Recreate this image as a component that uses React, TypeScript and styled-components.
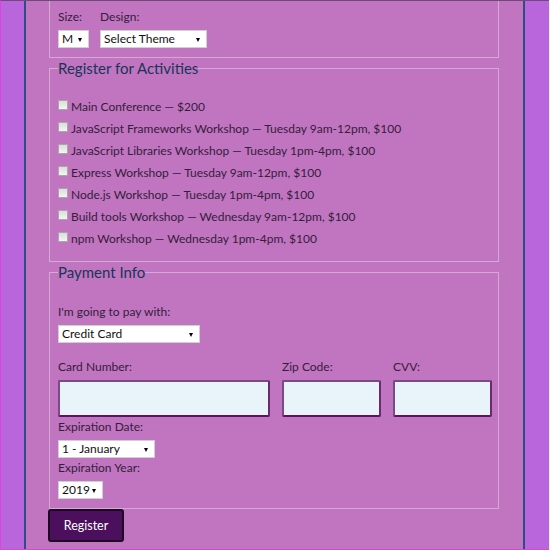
import React from "react";
import styled, { createGlobalStyle } from "styled-components";

const Global = createGlobalStyle`
  html, body { margin: 0; padding: 0; background: #f4eef6; }
  * { box-sizing: border-box; }
  body { font-family: Lato, "Open Sans", sans-serif; }
`;

const Page = styled.div`
  width: 549px;
  height: 550px;
  overflow: hidden;
  background: #b966dc;
  border-left: 1px solid #e040e0;
  border-top: 1px solid #6d4a77;
  border-bottom: 1px solid #e040e0;
`;

const Container = styled.div`
  margin-left: 23px;
  width: 501px;
  height: 100%;
  background: #c175c1;
  border-left: 2px solid #2b4f82;
  border-right: 2px solid #2b4f82;
  padding: 0 24px 0 23px;
`;

const Fieldset = styled.fieldset<{ $open?: boolean; $pb?: number }>`
  margin: 0;
  padding: ${(p) => (p.$open ? "8px" : "0")} 8px ${(p) => p.$pb ?? 9}px;
  border: 1px solid #d4a9d4;
  ${(p) => (p.$open ? "border-top: none;" : "")}
  min-width: 0;
`;

const Legend = styled.legend`
  font-size: 15px;
  line-height: 20px;
  color: #163656;
  padding: 0;
  margin-left: 0;
`;

const Label = styled.label`
  display: block;
  font-size: 12px;
  line-height: 16px;
  color: #33203a;
`;

const Row = styled.div`
  display: flex;
  gap: 11px;
`;

const Field = styled.div<{ $mt?: number }>`
  display: flex;
  flex-direction: column;
  gap: 5px;
  margin-top: ${(p) => p.$mt ?? 0}px;
`;

const SelectBox = styled.div<{ $w: number }>`
  position: relative;
  width: ${(p) => p.$w}px;
  height: 18px;
  background: #fff;
  border: 1px solid #d0d0d0;
  font-size: 12px;
  line-height: 16px;
  color: #111;
  padding-left: 3px;
  &::after {
    content: "";
    position: absolute;
    right: 6px;
    top: 7px;
    border-left: 2.5px solid transparent;
    border-right: 2.5px solid transparent;
    border-top: 4px solid #000;
  }
`;

const Activities = styled.div`
  display: flex;
  flex-direction: column;
  margin-top: 17px;
`;

const Activity = styled.label`
  display: flex;
  align-items: center;
  height: 22px;
  font-size: 12px;
  color: #33203a;
`;

const Check = styled.span`
  display: inline-block;
  width: 10px;
  height: 10px;
  margin-right: 3px;
  margin-top: -3px;
  border: 1px solid #a8a8a8;
  background: linear-gradient(#dcdcdc, #f4f4f4);
`;

const CardGrid = styled.div`
  display: grid;
  grid-template-columns: 212px 99px 99px;
  column-gap: 12px;
  margin-top: 16px;
`;

const Input = styled.div`
  height: 37px;
  background: #e8f4fa;
  border: 2px solid #7a4a88;
  border-bottom-color: #5a1560;
  border-right-color: #6a2a70;
  border-radius: 2px;
`;

const Button = styled.button`
  display: block;
  margin-left: -1px;
  width: 76px;
  height: 33px;
  background: #4b0f5e;
  border: 2px solid #1d0a22;
  border-radius: 3px;
  color: #fff;
  font-family: Lato, "Open Sans", sans-serif;
  font-size: 12.5px;
`;

const activities = [
  "Main Conference — $200",
  "JavaScript Frameworks Workshop — Tuesday 9am-12pm, $100",
  "JavaScript Libraries Workshop — Tuesday 1pm-4pm, $100",
  "Express Workshop — Tuesday 9am-12pm, $100",
  "Node.js Workshop — Tuesday 1pm-4pm, $100",
  "Build tools Workshop — Wednesday 9am-12pm, $100",
  "npm Workshop — Wednesday 1pm-4pm, $100",
];

export default function App() {
  return (
    <>
      <Global />
      <Page>
        <Container>
          <Fieldset $open>
            <Row>
              <Field>
                <Label>Size:</Label>
                <SelectBox $w={31}>M</SelectBox>
              </Field>
              <Field>
                <Label>Design:</Label>
                <SelectBox $w={107}>Select Theme</SelectBox>
              </Field>
            </Row>
          </Fieldset>
          <Fieldset $pb={12}>
            <Legend>Register for Activities</Legend>
            <Activities>
              {activities.map((a) => (
                <Activity key={a}>
                  <Check />
                  {a}
                </Activity>
              ))}
            </Activities>
          </Fieldset>
          <Fieldset $pb={9}>
            <Legend>Payment Info</Legend>
            <Field $mt={22}>
              <Label>I'm going to pay with:</Label>
              <SelectBox $w={142}>Credit Card</SelectBox>
            </Field>
            <CardGrid>
              <Field>
                <Label>Card Number:</Label>
                <Input />
              </Field>
              <Field>
                <Label>Zip Code:</Label>
                <Input />
              </Field>
              <Field>
                <Label>CVV:</Label>
                <Input />
              </Field>
            </CardGrid>
            <Field $mt={2}>
              <Label>Expiration Date:</Label>
              <SelectBox $w={97}>1 - January</SelectBox>
            </Field>
            <Field $mt={2}>
              <Label>Expiration Year:</Label>
              <SelectBox $w={45}>2019</SelectBox>
            </Field>
          </Fieldset>
          <Button>Register</Button>
        </Container>
      </Page>
    </>
  );
}
